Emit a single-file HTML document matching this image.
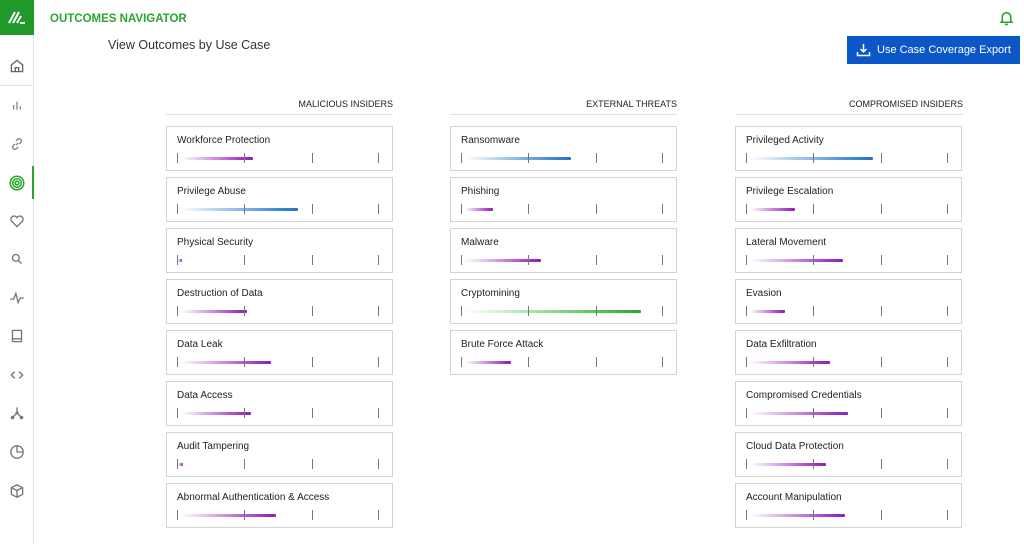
<!DOCTYPE html>
<html><head><meta charset="utf-8"><style>
*{margin:0;padding:0;box-sizing:border-box}
body{width:1024px;height:544px;background:#fff;font-family:"Liberation Sans",sans-serif;position:relative;overflow:hidden;color:#222}
.sb{position:absolute;left:0;top:0;width:34px;height:544px;border-right:1px solid #e3e3e3}
.logo{position:absolute;left:0;top:0;width:34px;height:35px;background:#1f9a2a}
.ic{position:absolute;left:8px;width:18px;height:18px}
.act{position:absolute;left:32px;top:166px;width:2px;height:33px;background:#2aa52f}
.t1{position:absolute;left:50px;top:13px;font-size:11.5px;font-weight:bold;color:#2aa52f}
.t2{position:absolute;left:108px;top:38px;font-size:12.5px;color:#333}
.btn{position:absolute;left:847px;top:36px;width:173px;height:28px;background:#0b57c8;color:#fff;font-size:11px;line-height:28px;padding-left:30px;white-space:nowrap}
.hd{position:absolute;top:99px;font-size:9px;color:#222;text-align:right;width:227px;border-bottom:1px solid #e0e0e0;height:16px}
.box{position:absolute;width:227px;height:45px;border:1.5px solid #d3d3d3}
.box .n{position:absolute;left:10px;top:8px;font-size:10px;color:#222}
.tk{position:absolute;top:26px;width:1px;height:10px;background:#777}
.bar{position:absolute;top:30px;height:2.5px;left:14px;border-radius:1px}
.p{background:linear-gradient(90deg,rgba(170,60,200,0),#a235c4 85%,#8a22b0)}
.b{background:linear-gradient(90deg,rgba(60,130,210,0),#3a86d6 85%,#2a70c0)}
.g{background:linear-gradient(90deg,rgba(60,190,60,0),#3fbf3f 85%,#2aa52a)}
</style></head><body>
<div class="sb">
<div class="logo"><svg width="34" height="35" viewBox="0 0 34 35"><path d="M9 23 L15 12 M13 23 L19 12 M17 23 L21 16 M20 23 L25 23" stroke="#fff" stroke-width="2" fill="none"/></svg></div>
<div style="position:absolute;left:0;top:85px;width:33px;height:1px;background:#e3e3e3"></div>
<svg class="ic" style="top:57px" viewBox="0 0 16 16" fill="none" stroke="#666" stroke-width="1.2"><path d="M3 7 L8 3 L13 7 V13 H3Z M6.5 13 V9.5 H9.5 V13"/></svg>
<svg class="ic" style="top:96px" viewBox="0 0 16 16" fill="none" stroke="#888" stroke-width="1.2"><path d="M5 12V8 M8 12V5 M11 12V9"/></svg>
<svg class="ic" style="top:135px" viewBox="0 0 16 16" fill="none" stroke="#888" stroke-width="1.2"><path d="M7 9 L9 7 M6 8 L4.5 9.5 a2 2 0 0 0 2.8 2.8 L9 10.5 M10 8 L11.5 6.5 a2 2 0 0 0 -2.8 -2.8 L7 5.5"/></svg>
<svg class="ic" style="top:174px" viewBox="0 0 16 16" fill="none" stroke="#2aa52f" stroke-width="1.4"><circle cx="8" cy="8" r="6"/><circle cx="8" cy="8" r="3.8"/><circle cx="8" cy="8" r="1.6"/></svg>
<div class="act"></div>
<svg class="ic" style="top:212px" viewBox="0 0 16 16" fill="none" stroke="#777" stroke-width="1.2"><path d="M8 13 L3 8 a2.7 2.7 0 0 1 5 -3 a2.7 2.7 0 0 1 5 3 Z"/></svg>
<svg class="ic" style="top:250px" viewBox="0 0 16 16" fill="none" stroke="#777" stroke-width="1.2"><circle cx="7" cy="7" r="3"/><path d="M9.2 9.2 L12 12"/></svg>
<svg class="ic" style="top:289px" viewBox="0 0 16 16" fill="none" stroke="#777" stroke-width="1.2"><path d="M2 9 H5 L7 4 L9 12 L11 8 H14"/></svg>
<svg class="ic" style="top:327px" viewBox="0 0 16 16" fill="none" stroke="#777" stroke-width="1.2"><path d="M4 3 H12 V13 H4Z M4 10.5 H12"/></svg>
<svg class="ic" style="top:366px" viewBox="0 0 16 16" fill="none" stroke="#777" stroke-width="1.2"><path d="M6 5 L3 8 L6 11 M10 5 L13 8 L10 11"/></svg>
<svg class="ic" style="top:404px" viewBox="0 0 16 16" fill="none" stroke="#777" stroke-width="1.2"><path d="M8 3 V8 L4 12 M8 8 L12 12"/><circle cx="4" cy="12" r="1" fill="#777"/><circle cx="12" cy="12" r="1" fill="#777"/><circle cx="8" cy="8" r=".8" fill="#777"/></svg>
<svg class="ic" style="top:443px" viewBox="0 0 16 16" fill="none" stroke="#777" stroke-width="1.2"><circle cx="8" cy="8" r="5.5"/><path d="M8 2.5 V8 H13.5"/></svg>
<svg class="ic" style="top:482px" viewBox="0 0 16 16" fill="none" stroke="#777" stroke-width="1.2"><path d="M8 2.5 L13 5 V11 L8 13.5 L3 11 V5Z M3 5 L8 7.5 L13 5 M8 7.5 V13.5"/></svg>
</div>
<div class="t1">OUTCOMES NAVIGATOR</div>
<div class="t2">View Outcomes by Use Case</div>
<svg style="position:absolute;left:998px;top:9px" width="17" height="18" viewBox="0 0 16 16" fill="none" stroke="#2aa52f" stroke-width="1.5"><path d="M4 11 V7 a4 4 0 0 1 8 0 V11 L13 12 H3Z M6.5 14 H9.5"/></svg>
<div class="btn"><svg style="position:absolute;left:9px;top:7px" width="15" height="14" viewBox="0 0 15 14" fill="none" stroke="#fff" stroke-width="1.5"><path d="M7.5 1 V9 M4.5 6 L7.5 9 L10.5 6 M1.5 9 V12.5 H13.5 V9"/></svg>Use Case Coverage Export</div>

<div class="hd" style="left:166px">MALICIOUS INSIDERS</div>
<div class="hd" style="left:450px">EXTERNAL THREATS</div>
<div class="hd" style="left:736px">COMPROMISED INSIDERS</div>

<div class="box" style="left:166px;top:126px"><div class="n">Workforce Protection</div><div class="bar p" style="width:72px"></div><div class="tk" style="left:10px"></div><div class="tk" style="left:77px"></div><div class="tk" style="left:145px"></div><div class="tk" style="left:211px"></div></div>
<div class="box" style="left:166px;top:177px"><div class="n">Privilege Abuse</div><div class="bar b" style="width:117px"></div><div class="tk" style="left:10px"></div><div class="tk" style="left:77px"></div><div class="tk" style="left:145px"></div><div class="tk" style="left:211px"></div></div>
<div class="box" style="left:166px;top:228px"><div class="n">Physical Security</div><div class="bar p" style="left:11px;width:4px"></div><div class="tk" style="left:10px"></div><div class="tk" style="left:77px"></div><div class="tk" style="left:145px"></div><div class="tk" style="left:211px"></div></div>
<div class="box" style="left:166px;top:279px"><div class="n">Destruction of Data</div><div class="bar p" style="width:66px"></div><div class="tk" style="left:10px"></div><div class="tk" style="left:77px"></div><div class="tk" style="left:145px"></div><div class="tk" style="left:211px"></div></div>
<div class="box" style="left:166px;top:330px"><div class="n">Data Leak</div><div class="bar p" style="width:90px"></div><div class="tk" style="left:10px"></div><div class="tk" style="left:77px"></div><div class="tk" style="left:145px"></div><div class="tk" style="left:211px"></div></div>
<div class="box" style="left:166px;top:381px"><div class="n">Data Access</div><div class="bar p" style="width:70px"></div><div class="tk" style="left:10px"></div><div class="tk" style="left:77px"></div><div class="tk" style="left:145px"></div><div class="tk" style="left:211px"></div></div>
<div class="box" style="left:166px;top:432px"><div class="n">Audit Tampering</div><div class="bar p" style="left:11px;width:5px"></div><div class="tk" style="left:10px"></div><div class="tk" style="left:77px"></div><div class="tk" style="left:145px"></div><div class="tk" style="left:211px"></div></div>
<div class="box" style="left:166px;top:483px"><div class="n">Abnormal Authentication &amp; Access</div><div class="bar p" style="width:95px"></div><div class="tk" style="left:10px"></div><div class="tk" style="left:77px"></div><div class="tk" style="left:145px"></div><div class="tk" style="left:211px"></div></div>

<div class="box" style="left:450px;top:126px"><div class="n">Ransomware</div><div class="bar b" style="width:106px"></div><div class="tk" style="left:10px"></div><div class="tk" style="left:77px"></div><div class="tk" style="left:145px"></div><div class="tk" style="left:211px"></div></div>
<div class="box" style="left:450px;top:177px"><div class="n">Phishing</div><div class="bar p" style="width:28px"></div><div class="tk" style="left:10px"></div><div class="tk" style="left:77px"></div><div class="tk" style="left:145px"></div><div class="tk" style="left:211px"></div></div>
<div class="box" style="left:450px;top:228px"><div class="n">Malware</div><div class="bar p" style="width:76px"></div><div class="tk" style="left:10px"></div><div class="tk" style="left:77px"></div><div class="tk" style="left:145px"></div><div class="tk" style="left:211px"></div></div>
<div class="box" style="left:450px;top:279px"><div class="n">Cryptomining</div><div class="bar g" style="width:176px"></div><div class="tk" style="left:10px"></div><div class="tk" style="left:77px"></div><div class="tk" style="left:145px"></div><div class="tk" style="left:211px"></div></div>
<div class="box" style="left:450px;top:330px"><div class="n">Brute Force Attack</div><div class="bar p" style="width:46px"></div><div class="tk" style="left:10px"></div><div class="tk" style="left:77px"></div><div class="tk" style="left:145px"></div><div class="tk" style="left:211px"></div></div>

<div class="box" style="left:735px;top:126px"><div class="n">Privileged Activity</div><div class="bar b" style="width:123px"></div><div class="tk" style="left:10px"></div><div class="tk" style="left:77px"></div><div class="tk" style="left:145px"></div><div class="tk" style="left:211px"></div></div>
<div class="box" style="left:735px;top:177px"><div class="n">Privilege Escalation</div><div class="bar p" style="width:45px"></div><div class="tk" style="left:10px"></div><div class="tk" style="left:77px"></div><div class="tk" style="left:145px"></div><div class="tk" style="left:211px"></div></div>
<div class="box" style="left:735px;top:228px"><div class="n">Lateral Movement</div><div class="bar p" style="width:93px"></div><div class="tk" style="left:10px"></div><div class="tk" style="left:77px"></div><div class="tk" style="left:145px"></div><div class="tk" style="left:211px"></div></div>
<div class="box" style="left:735px;top:279px"><div class="n">Evasion</div><div class="bar p" style="width:35px"></div><div class="tk" style="left:10px"></div><div class="tk" style="left:77px"></div><div class="tk" style="left:145px"></div><div class="tk" style="left:211px"></div></div>
<div class="box" style="left:735px;top:330px"><div class="n">Data Exfiltration</div><div class="bar p" style="width:80px"></div><div class="tk" style="left:10px"></div><div class="tk" style="left:77px"></div><div class="tk" style="left:145px"></div><div class="tk" style="left:211px"></div></div>
<div class="box" style="left:735px;top:381px"><div class="n">Compromised Credentials</div><div class="bar p" style="width:98px"></div><div class="tk" style="left:10px"></div><div class="tk" style="left:77px"></div><div class="tk" style="left:145px"></div><div class="tk" style="left:211px"></div></div>
<div class="box" style="left:735px;top:432px"><div class="n">Cloud Data Protection</div><div class="bar p" style="width:76px"></div><div class="tk" style="left:10px"></div><div class="tk" style="left:77px"></div><div class="tk" style="left:145px"></div><div class="tk" style="left:211px"></div></div>
<div class="box" style="left:735px;top:483px"><div class="n">Account Manipulation</div><div class="bar p" style="width:95px"></div><div class="tk" style="left:10px"></div><div class="tk" style="left:77px"></div><div class="tk" style="left:145px"></div><div class="tk" style="left:211px"></div></div>
</body></html>
